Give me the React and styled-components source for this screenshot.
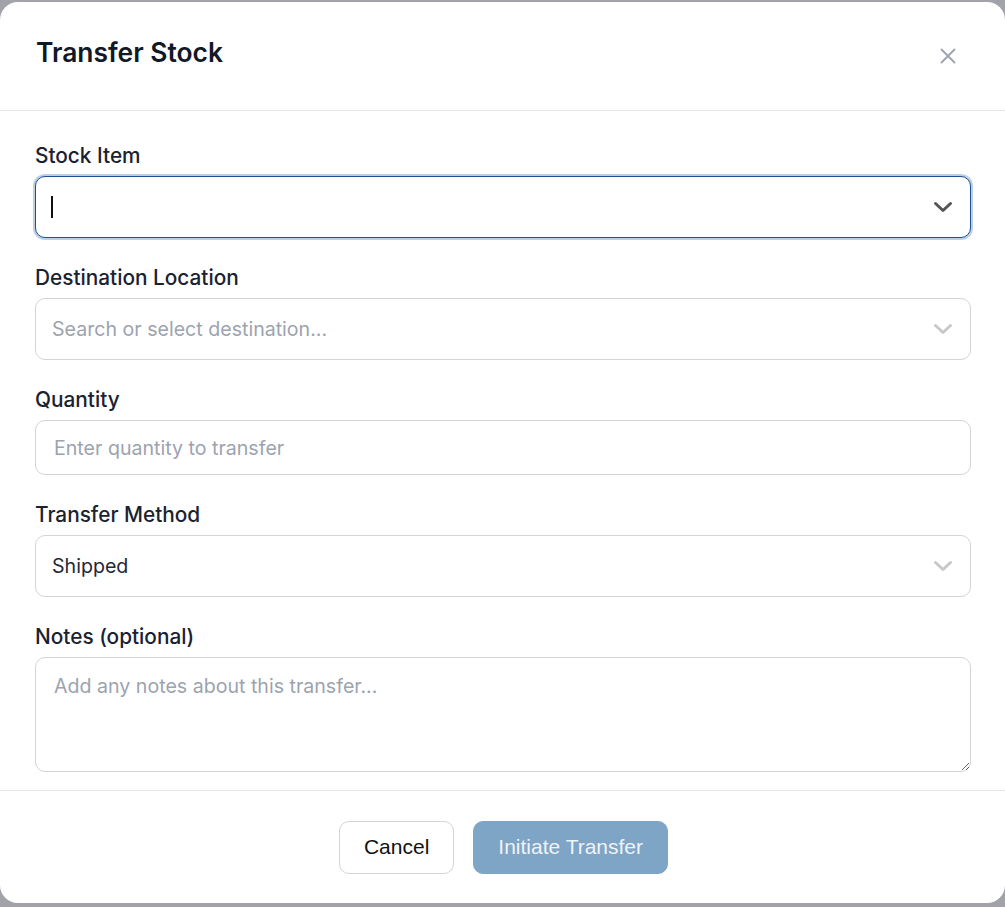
import React from 'react';
import styled, { createGlobalStyle } from 'styled-components';

const GlobalStyle = createGlobalStyle`
  html, body {
    margin: 0;
    padding: 0;
    background: #a2a3a8;
  }
  body {
    font-family: Inter, "Noto Sans", sans-serif;
  }
  * {
    box-sizing: border-box;
  }
`;

const Backdrop = styled.div`
  width: 1005px;
  height: 907px;
  padding-top: 2px;
  overflow: hidden;
`;

const Modal = styled.div`
  width: 1005px;
  height: 901px;
  background: #fff;
  border-radius: 18px;
  display: flex;
  flex-direction: column;
`;

const Header = styled.div`
  height: 109px;
  border-bottom: 1px solid #e5e7eb;
  display: flex;
  align-items: flex-start;
  justify-content: space-between;
  padding: 32px 48px 0 36px;
`;

const Title = styled.h2`
  margin: 0;
  font-size: 26.4px;
  line-height: 36px;
  font-weight: 600;
  color: #111827;
`;

const CloseButton = styled.button`
  border: none;
  background: none;
  padding: 0;
  margin-top: 12px;
  width: 18px;
  height: 20px;
  display: flex;
  align-items: center;
  justify-content: center;
  color: #9ca3af;
  cursor: pointer;
`;

const Body = styled.div`
  flex: 1;
  padding: 29px 34px 0 35px;
  display: flex;
  flex-direction: column;
  gap: 24px;
`;

const Field = styled.div`
  display: flex;
  flex-direction: column;
  gap: 6px;
`;

const Label = styled.label`
  margin-top: 2px;
  font-size: 20.8px;
  line-height: 28px;
  font-weight: 500;
  color: #1a2231;
`;

const Box = styled.div`
  height: ${p => p.$h}px;
  border: 1px solid ${p => (p.$focused ? '#1f5192' : '#d4d4d8')};
  box-shadow: ${p => (p.$focused ? '0 0 0 2px #bcd0e4' : 'none')};
  border-radius: 10px;
  display: flex;
  align-items: center;
  padding: 0 17px 0 ${p => p.$pl || 16}px;
  background: #fff;
`;

const Value = styled.span`
  flex: 1;
  font-size: 19.6px;
  color: ${p => (p.$placeholder ? '#9ca3af' : '#1f2937')};
`;

const Caret = styled.span`
  display: block;
  width: 1.5px;
  height: 22px;
  margin-left: -1px;
  background: #111;
`;

const Grow = styled.span`
  flex: 1;
`;

const TextArea = styled.textarea`
  height: 115px;
  border: 1px solid #d4d4d8;
  border-radius: 10px;
  padding: 16px 18px;
  font-family: Inter, "Noto Sans", sans-serif;
  font-size: 19.6px;
  resize: vertical;
  outline: none;
  &::placeholder {
    color: #9ca3af;
  }
`;

const Footer = styled.div`
  height: 113px;
  border-top: 1px solid #e5e7eb;
  display: flex;
  align-items: center;
  justify-content: center;
  gap: 19px;
  padding-left: 2px;
`;

const Button = styled.button`
  height: 53px;
  padding: 0 24px;
  border-radius: 10px;
  font-family: "Liberation Sans", Arial, sans-serif;
  font-size: 21px;
  border: 1px solid ${p => (p.$primary ? '#7fa5c6' : '#d4d4d8')};
  background: ${p => (p.$primary ? '#7fa5c6' : '#fff')};
  color: ${p => (p.$primary ? '#eef3f8' : '#111')};
`;

const Chevron = ({ dark }) => (
  <svg width="20" height="12" viewBox="0 0 20 12" fill="none"
    stroke={dark ? '#555' : '#c8c8cc'} strokeWidth="3" strokeLinecap="round" strokeLinejoin="round">
    <path d="M2.5 2.5L10 9.5L17.5 2.5" />
  </svg>
);

const CloseIcon = () => (
  <svg width="16" height="16" viewBox="0 0 16 16" fill="none" stroke="currentColor" strokeWidth="1.8" strokeLinecap="round">
    <path d="M1.5 1.5l13 13M14.5 1.5l-13 13" />
  </svg>
);

export default function App() {
  return (
    <>
      <GlobalStyle />
      <Backdrop>
        <Modal>
          <Header>
            <Title>Transfer Stock</Title>
            <CloseButton aria-label="Close"><CloseIcon /></CloseButton>
          </Header>
          <Body>
            <Field>
              <Label>Stock Item</Label>
              <Box $h={62} $focused>
                <Caret />
                <Grow />
                <Chevron dark />
              </Box>
            </Field>
            <Field>
              <Label>Destination Location</Label>
              <Box $h={62}>
                <Value $placeholder>Search or select destination...</Value>
                <Chevron />
              </Box>
            </Field>
            <Field>
              <Label>Quantity</Label>
              <Box $h={55} $pl={18}>
                <Value $placeholder>Enter quantity to transfer</Value>
              </Box>
            </Field>
            <Field>
              <Label>Transfer Method</Label>
              <Box $h={62}>
                <Value>Shipped</Value>
                <Chevron />
              </Box>
            </Field>
            <Field>
              <Label>Notes (optional)</Label>
              <TextArea placeholder="Add any notes about this transfer..." />
            </Field>
          </Body>
          <Footer>
            <Button>Cancel</Button>
            <Button $primary disabled>Initiate Transfer</Button>
          </Footer>
        </Modal>
      </Backdrop>
    </>
  );
}
